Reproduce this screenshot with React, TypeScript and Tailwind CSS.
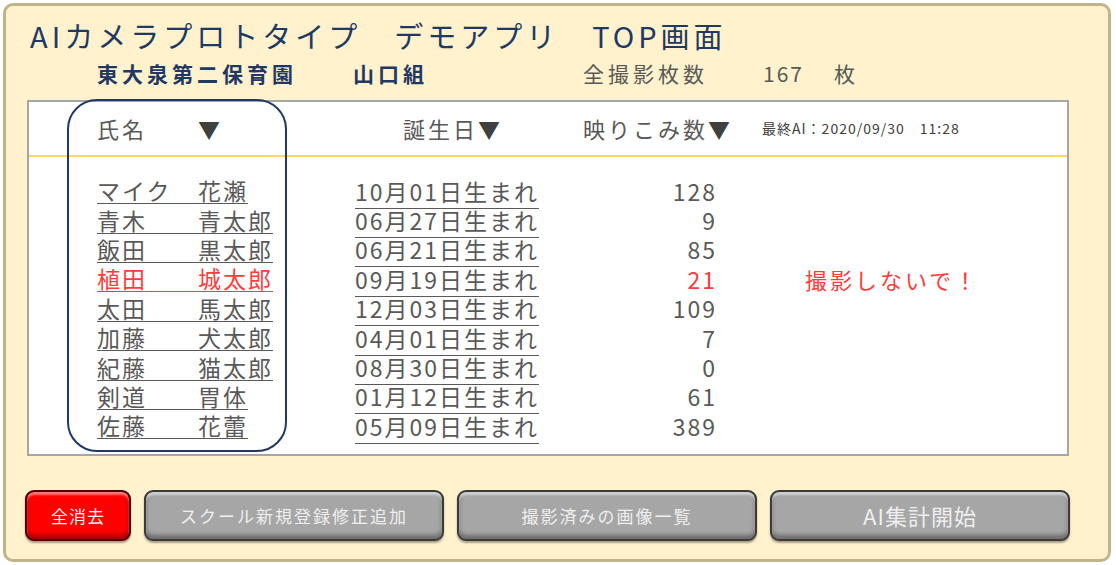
import React from "react";

const rows = [
  { f: "マイク", g: "花瀬", d: "10月01日生まれ", n: "128" },
  { f: "青木", g: "青太郎", d: "06月27日生まれ", n: "9" },
  { f: "飯田", g: "黒太郎", d: "06月21日生まれ", n: "85" },
  { f: "植田", g: "城太郎", d: "09月19日生まれ", n: "21", red: true, note: "撮影しないで！" },
  { f: "太田", g: "馬太郎", d: "12月03日生まれ", n: "109" },
  { f: "加藤", g: "犬太郎", d: "04月01日生まれ", n: "7" },
  { f: "紀藤", g: "猫太郎", d: "08月30日生まれ", n: "0" },
  { f: "剣道", g: "胃体", d: "01月12日生まれ", n: "61" },
  { f: "佐藤", g: "花蕾", d: "05月09日生まれ", n: "389" },
];

const font = { fontFamily: '"Noto Sans CJK JP", "Noto Sans", sans-serif' };

const btnShadow =
  "shadow-[inset_0_3px_2px_rgba(255,255,255,0.45),inset_0_-4px_4px_rgba(0,0,0,0.35),0_2px_2px_rgba(0,0,0,0.35)]";

export default function App() {
  return (
    <div className="w-[1116px] h-[565px] bg-white p-[3px]" style={font}>
      <div className="h-[559px] w-[1108px] rounded-[10px] border-[3px] border-[#c0b48c] bg-[#fff2cc] flex flex-col">
        <div className="pt-[11px] pl-[24px] text-[29px] leading-[36px] tracking-[4px] text-[#1f3864] whitespace-pre">
          AIカメラプロトタイプ　デモアプリ　TOP画面
        </div>
        <div className="mt-[6px] h-[28px] flex items-center text-[21px] leading-[28px] tracking-[4px]">
          <span className="ml-[91px] w-[256px] font-bold text-[#1f3864]">東大泉第二保育園</span>
          <span className="w-[230px] font-bold text-[#1f3864]">山口組</span>
          <span className="w-[180px] text-[#595959]">全撮影枚数</span>
          <span className="w-[71px] text-[#595959] tracking-[2px]">167</span>
          <span className="text-[#595959]">枚</span>
        </div>
        <div className="relative mt-[13px] ml-[21px] w-[1042px] h-[356px] border-2 border-[#a6a6a6] bg-white">
          <div className="absolute left-[38px] top-[-3px] w-[220px] h-[353px] rounded-[30px] border-2 border-[#1f3864] pointer-events-none" />
          <div className="h-[55px] border-b-2 border-[#ffd966] flex items-center text-[22px] tracking-[3px] text-[#595959]">
            <span className="ml-[68px] w-[101px]">氏名</span>
            <span className="w-[205px] text-[#404040]">▼</span>
            <span className="w-[180px]">誕生日<span className="text-[#404040]">▼</span></span>
            <span className="w-[179px]">映りこみ数<span className="text-[#404040]">▼</span></span>
            <span className="text-[14px] tracking-[1px] text-[#404040] whitespace-pre">最終AI：2020/09/30　11:28</span>
          </div>
          <div className="pt-[19px] text-[23px] tracking-[2px]">
            {rows.map((r, i) => {
              const c = r.red ? "text-[#ff3b3b]" : "text-[#595959]";
              const b = r.red ? "border-[#ff3b3b]" : "border-[#595959]";
              return (
                <div key={i} className={`flex h-[29.4px] items-center leading-[26px] ${c}`}>
                  <div className="ml-[68px] w-[258px]">
                    <span className={`inline-flex border-b ${b}`}>
                      <span className="w-[101px]">{r.f}</span>
                      <span>{r.g}</span>
                    </span>
                  </div>
                  <div className="w-[250px]">
                    <span className="border-b border-[#595959] text-[#595959]">{r.d}</span>
                  </div>
                  <div className="w-[112px] text-right">{r.n}</div>
                  <div className="ml-[88px] text-[22px] tracking-[3px]">{r.note ?? ""}</div>
                </div>
              );
            })}
          </div>
        </div>
        <div className="mt-[34px] ml-[19px] flex gap-[13px] h-[51px]">
          <button className={`w-[106px] h-[51px] rounded-[9px] border-2 border-[#4a0000] bg-[#ff0000] text-[17px] text-[#fff2f2] tracking-[1px] ${btnShadow}`}>
            全消去
          </button>
          <button className={`w-[300px] h-[51px] rounded-[9px] border-2 border-[#3a3a3a] bg-[#a6a6a6] text-[17px] text-[#efefef] tracking-[2px] ${btnShadow}`}>
            スクール新規登録修正追加
          </button>
          <button className={`w-[300px] h-[51px] rounded-[9px] border-2 border-[#3a3a3a] bg-[#a6a6a6] text-[17px] text-[#efefef] tracking-[2px] ${btnShadow}`}>
            撮影済みの画像一覧
          </button>
          <button className={`w-[300px] h-[51px] rounded-[9px] border-2 border-[#3a3a3a] bg-[#a6a6a6] text-[22px] text-[#efefef] tracking-[1px] ${btnShadow}`}>
            AI集計開始
          </button>
        </div>
      </div>
    </div>
  );
}
